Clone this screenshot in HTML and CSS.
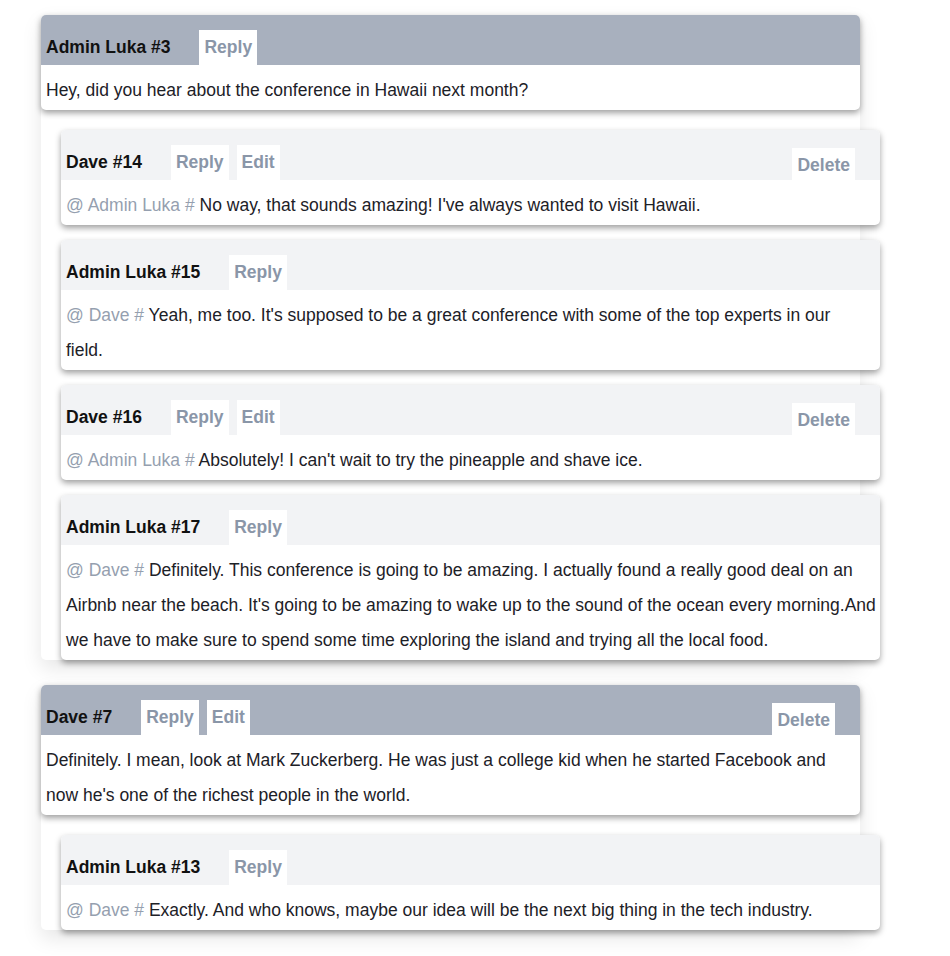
FILE: index.html
```html
<!DOCTYPE html>
<html lang="en">
<head>
<meta charset="utf-8">
<title>Comments</title>
<link rel="stylesheet" href="styles.css">
</head>
<body>
<div class="threads">
  <section class="thread">
    <article class="card top">
      <header class="card-head">
        <span class="name">Admin Luka #3</span>
        <button class="btn">Reply</button>
      </header>
      <div class="card-body">Hey, did you hear about the conference in Hawaii next month?</div>
    </article>
    <div class="replies">
      <article class="card reply">
        <header class="card-head">
          <span class="name">Dave #14</span>
          <button class="btn">Reply</button>
          <button class="btn">Edit</button>
          <button class="btn delete">Delete</button>
        </header>
        <div class="card-body"><span class="mention">@ Admin Luka #</span> No way, that sounds amazing! I've always wanted to visit Hawaii.</div>
      </article>
      <article class="card reply">
        <header class="card-head">
          <span class="name">Admin Luka #15</span>
          <button class="btn">Reply</button>
        </header>
        <div class="card-body"><span class="mention">@ Dave #</span> Yeah, me too. It's supposed to be a great conference with some of the top experts in our<br>field.</div>
      </article>
      <article class="card reply">
        <header class="card-head">
          <span class="name">Dave #16</span>
          <button class="btn">Reply</button>
          <button class="btn">Edit</button>
          <button class="btn delete">Delete</button>
        </header>
        <div class="card-body"><span class="mention">@ Admin Luka #</span> Absolutely! I can't wait to try the pineapple and shave ice.</div>
      </article>
      <article class="card reply">
        <header class="card-head">
          <span class="name">Admin Luka #17</span>
          <button class="btn">Reply</button>
        </header>
        <div class="card-body"><span class="mention">@ Dave #</span> Definitely. This conference is going to be amazing. I actually found a really good deal on an Airbnb near the beach. It's going to be amazing to wake up to the sound of the ocean every morning.And we have to make sure to spend some time exploring the island and trying all the local food.</div>
      </article>
    </div>
  </section>

  <section class="thread">
    <article class="card top">
      <header class="card-head">
        <span class="name">Dave #7</span>
        <button class="btn">Reply</button>
        <button class="btn">Edit</button>
        <button class="btn delete">Delete</button>
      </header>
      <div class="card-body">Definitely. I mean, look at Mark Zuckerberg. He was just a college kid when he started Facebook and now he's one of the richest people in the world.</div>
    </article>
    <div class="replies">
      <article class="card reply">
        <header class="card-head">
          <span class="name">Admin Luka #13</span>
          <button class="btn">Reply</button>
        </header>
        <div class="card-body"><span class="mention">@ Dave #</span> Exactly. And who knows, maybe our idea will be the next big thing in the tech industry.</div>
      </article>
    </div>
  </section>
</div>
</body>
</html>
```

FILE: styles.css
```css
* { box-sizing: border-box; }

html, body {
  margin: 0;
  padding: 0;
  background: #ffffff;
}

body {
  font-family: "Liberation Sans", Arial, sans-serif;
  color: #1d2127;
  padding-bottom: 26px;
}

.threads {
  width: 819px;
  margin-left: 41px;
  padding-top: 15px;
  display: flex;
  flex-direction: column;
  gap: 25px;
}

.thread {
  background: #ffffff;
  border-radius: 5px;
  box-shadow: 0 8px 20px rgba(0, 0, 0, 0.10);
}

.card {
  width: 819px;
  border-radius: 5px;
  overflow: hidden;
  background: #ffffff;
  box-shadow: 0 3px 6px rgba(0, 0, 0, 0.38);
}

.card.top .card-head { background: #a8b0be; }
.card.reply .card-head { background: #f2f3f5; }

.card-head {
  display: flex;
  align-items: flex-end;
  height: 50px;
  padding: 15px 0 0 5px;
}

.name {
  font-weight: bold;
  font-size: 17.5px;
  line-height: 35px;
  color: #111;
  margin-right: 29px;
}

.btn {
  border: none;
  background: #ffffff;
  color: #8a96a8;
  font-family: inherit;
  font-weight: bold;
  font-size: 17.5px;
  line-height: 35px;
  height: 35px;
  padding: 0 5px;
  margin: 0 8px 0 0;
  cursor: pointer;
}

.btn.delete {
  margin-left: auto;
  margin-right: 25px;
  height: 32px;
  line-height: 34px;
}

.card-body {
  padding: 8px 2px 2px 5px;
  font-size: 17.5px;
  line-height: 35px;
}

.mention { color: #959faf; }

.replies {
  margin-left: 20px;
  padding-top: 5px;
  display: flex;
  flex-direction: column;
}

.replies .card { margin-top: 15px; }
```
